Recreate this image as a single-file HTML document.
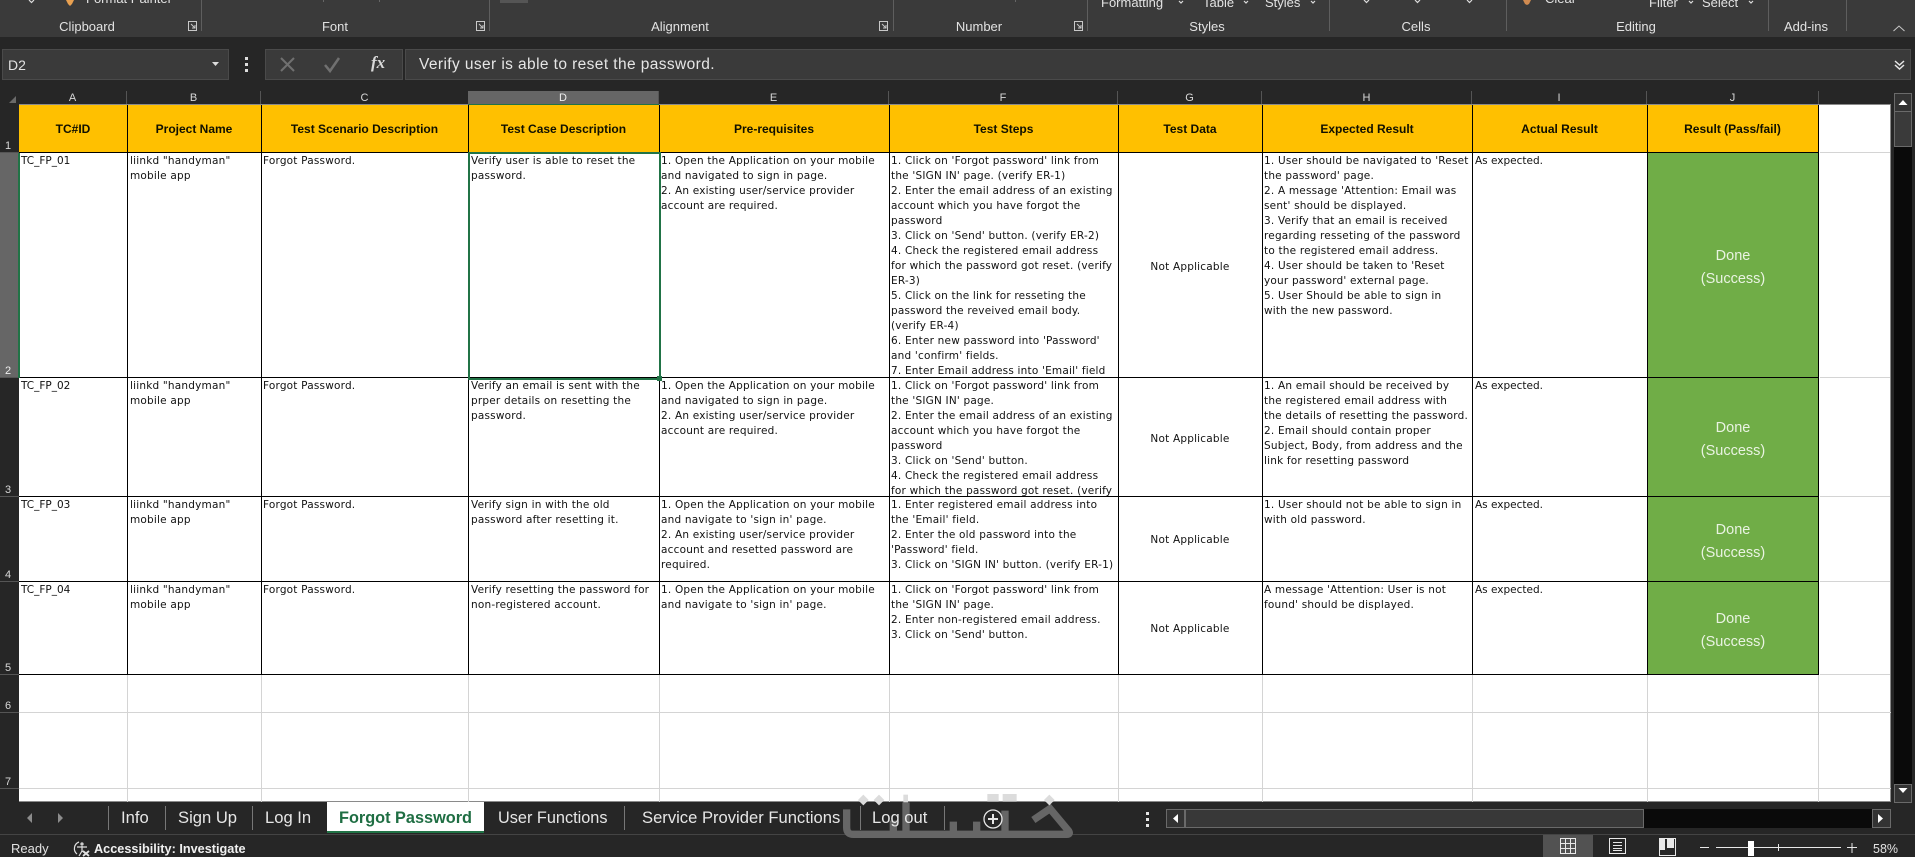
<!DOCTYPE html>
<html><head><meta charset="utf-8"><title>Excel</title>
<style>
html,body{margin:0;padding:0;background:#262626;width:1915px;height:857px;overflow:hidden}
body{position:relative;font-family:"Liberation Sans",sans-serif;color:#e6e6e6}
.a{position:absolute}
.l{position:absolute;white-space:nowrap;font-size:13px;line-height:16px;color:#e2e2e2}
.lbl{position:absolute;top:19px;white-space:nowrap;font-size:13px;line-height:16px;color:#e2e2e2;transform:translateX(-50%)}
.sep{position:absolute;top:0;width:1px;height:31px;background:#5e5e5e}
.h{position:absolute;top:91px;height:14px;font-size:11px;line-height:15px;text-align:center;color:#d8d8d8;background:#262626;border-right:1px solid #555;box-sizing:border-box}
.rh{position:absolute;left:0;width:19px;background:#262626;border-bottom:1px solid #555;box-sizing:border-box;color:#d8d8d8;font-size:11px}
.rh span{position:absolute;left:5px;bottom:-1px;line-height:13px}
.v{position:absolute;width:1px;background:#d4d4d4}
.hz{position:absolute;height:1px;background:#d4d4d4;left:19px;width:1872px}
.b{position:absolute;background:#000}
.row{position:absolute;left:0;width:1891px;overflow:hidden}
.c{position:absolute;top:1px;white-space:nowrap;font-family:"DejaVu Sans","Liberation Sans",sans-serif;font-size:10.500px;letter-spacing:.2px;line-height:15px;color:#111}
.c1{left:21px;letter-spacing:0}.c2{left:130px}.c3{left:263px}.c4{left:471px}.c5{left:661px}.c6{left:891px}.c8{left:1264px}.c9{left:1475px;letter-spacing:0}
.na{position:absolute;left:1118px;width:144px;text-align:center;white-space:nowrap;font-family:"DejaVu Sans",sans-serif;font-size:10.500px;letter-spacing:.2px;line-height:15px;color:#111}
.gr{position:absolute;left:1648px;width:170px;background:#70ad47;color:#e9f3e2;text-align:center;font-size:14.500px;line-height:23px;display:flex;align-items:center;justify-content:center;padding-top:5px;box-sizing:border-box}
.th{position:absolute;top:105px;height:47px;background:#ffc000;font-weight:bold;font-size:12px;line-height:49px;text-align:center;color:#101000;white-space:nowrap}
.tab{position:absolute;top:808px;font-size:16.600px;line-height:20px;color:#e6e6e6;white-space:nowrap}
.ts{position:absolute;top:806px;width:1px;height:24px;background:#777}
</style></head><body>

<!-- Ribbon -->
<div class="a" style="left:0;top:0;width:1915px;height:37px;background:#3a3a3a"></div>
<div class="sep" style="left:201px"></div><div class="sep" style="left:489px"></div><div class="sep" style="left:893px"></div><div class="sep" style="left:1087px"></div><div class="sep" style="left:1329px"></div><div class="sep" style="left:1506px"></div><div class="sep" style="left:1768px"></div><div class="sep" style="left:1846px"></div>
<div class="a" style="left:323px;top:0;width:1px;height:2px;background:#666"></div>
<div class="a" style="left:379px;top:0;width:1px;height:2px;background:#666"></div>
<div class="a" style="left:500px;top:0;width:28px;height:3px;background:#555"></div>
<div class="a" style="left:1015px;top:0;width:1px;height:2px;background:#666"></div>

<div class="l" style="left:86px;top:-9px">Format Painter</div>
<div class="l" style="left:1101px;top:-5px">Formatting</div>
<div class="l" style="left:1203px;top:-5px">Table</div>
<div class="l" style="left:1265px;top:-5px">Styles</div>
<div class="l" style="left:1545px;top:-9px">Clear</div>
<div class="l" style="left:1649px;top:-5px">Filter</div>
<div class="l" style="left:1702px;top:-5px">Select</div>
<svg class="a" style="left:0;top:0" width="1915" height="37" fill="none">
<g stroke="#dcdcdc" stroke-width="1.2">
<path d="M29 0l2.500 2.500L34 0M1179 1l2 2 2-2M1244 1l2 2 2-2M1311 1l2 2 2-2M1689 1l2 2 2-2M1749 1l2 2 2-2M1364 0l2.500 2.500 2.500-2.500M1415 0l2.500 2.500 2.500-2.500M1467 0l2.500 2.500 2.500-2.500"/>
</g>
<path d="M66 0h8l-2 4-2 2-2-2z" fill="#e8a050"/>
<path d="M1523 0h8l-2 4-2 1-2-1z" fill="#d08a50"/>
<g stroke="#c8c8c8" stroke-width="1">
<path d="M188.500 21.500h8v9h-8zM191 24l4 4M195 25v3h-3"/>
<path d="M476.500 21.500h8v9h-8zM479 24l4 4M483 25v3h-3"/>
<path d="M879.500 21.500h8v9h-8zM882 24l4 4M886 25v3h-3"/>
<path d="M1074.500 21.500h8v9h-8zM1077 24l4 4M1081 25v3h-3"/>
<path d="M1893.500 31l5.500-5 5.500 5"/>
</g>
</svg>
<div class="lbl" style="left:87px">Clipboard</div>
<div class="lbl" style="left:335px">Font</div>
<div class="lbl" style="left:680px">Alignment</div>
<div class="lbl" style="left:979px">Number</div>
<div class="lbl" style="left:1207px">Styles</div>
<div class="lbl" style="left:1416px">Cells</div>
<div class="lbl" style="left:1636px">Editing</div>
<div class="lbl" style="left:1806px">Add-ins</div>

<!-- Formula bar -->
<div class="a" style="left:2px;top:49px;width:225px;height:29px;background:#3a3a3a;border:1px solid #4a4a4a;box-sizing:content-box"></div>
<div class="l" style="left:8px;top:57px;font-size:14px">D2</div>
<div class="a" style="left:265px;top:49px;width:136px;height:29px;background:#3a3a3a;border:1px solid #4a4a4a"></div>
<div class="a" style="left:405px;top:49px;width:1504px;height:29px;background:#3a3a3a;border:1px solid #4a4a4a"></div>
<div class="l" style="left:419px;top:57px;font-size:15.500px;letter-spacing:.4px;color:#e6e6e6">Verify user is able to reset the password.</div>
<svg class="a" style="left:0;top:45px" width="1915" height="40" fill="none">
<path d="M212 17h7l-3.500 4z" fill="#ddd"/>
<g fill="#ddd"><rect x="245" y="12" width="3" height="3"/><rect x="245" y="18" width="3" height="3"/><rect x="245" y="24" width="3" height="3"/></g>
<path d="M281 13l13 13M294 13l-13 13" stroke="#707070" stroke-width="2"/>
<path d="M325 20l5 6 9-13" stroke="#707070" stroke-width="2.500"/>
<path d="M1895 16l4.500 4 4.500-4M1895 20l4.500 4 4.500-4" stroke="#e6e6e6" stroke-width="1.500"/>
</svg>
<div class="l" style="left:371px;top:55px;font-family:'Liberation Serif',serif;font-style:italic;font-weight:bold;font-size:17px;color:#d8d8d8">fx</div>

<!-- Column headers -->
<svg class="a" style="left:8px;top:95px" width="10" height="9"><path d="M8 1v7H1z" fill="#6a6a6a"/></svg>
<div class="h" style="left:19px;width:108px">A</div>
<div class="h" style="left:127px;width:134px">B</div>
<div class="h" style="left:261px;width:208px">C</div>
<div class="h" style="left:468px;width:191px;background:#666;color:#eee">D</div>
<div class="h" style="left:659px;width:230px">E</div>
<div class="h" style="left:889px;width:229px">F</div>
<div class="h" style="left:1118px;width:144px">G</div>
<div class="h" style="left:1262px;width:210px">H</div>
<div class="h" style="left:1472px;width:175px">I</div>
<div class="h" style="left:1647px;width:172px">J</div>

<!-- Sheet -->
<div class="a" style="left:19px;top:104px;width:1872px;height:698px;background:#fff;border-right:1px solid #8a8a8a;border-bottom:1px solid #8a8a8a;border-top:1px solid #8a8a8a;box-sizing:border-box"></div>

<!-- Row headers -->
<div class="rh" style="top:105px;height:48px"><span>1</span></div>
<div class="rh" style="top:153px;height:225px;background:#666;color:#eee"><span>2</span></div>
<div class="rh" style="top:378px;height:119px"><span>3</span></div>
<div class="rh" style="top:497px;height:85px"><span>4</span></div>
<div class="rh" style="top:582px;height:93px"><span>5</span></div>
<div class="rh" style="top:675px;height:38px"><span>6</span></div>
<div class="rh" style="top:713px;height:76px"><span>7</span></div>
<div class="rh" style="top:789px;height:13px;border-bottom:0"></div>

<!-- Gridlines below table -->
<div class="v" style="left:127px;top:674px;height:128px"></div><div class="v" style="left:261px;top:674px;height:128px"></div><div class="v" style="left:468px;top:674px;height:128px"></div><div class="v" style="left:659px;top:674px;height:128px"></div><div class="v" style="left:889px;top:674px;height:128px"></div><div class="v" style="left:1118px;top:674px;height:128px"></div><div class="v" style="left:1262px;top:674px;height:128px"></div><div class="v" style="left:1472px;top:674px;height:128px"></div><div class="v" style="left:1647px;top:674px;height:128px"></div><div class="v" style="left:1818px;top:674px;height:128px"></div>
<div class="hz" style="top:712px"></div><div class="hz" style="top:788px"></div>
<div class="a" style="left:1820px;top:152px;width:70px;height:1px;background:#d4d4d4"></div>
<div class="a" style="left:1820px;top:377px;width:70px;height:1px;background:#d4d4d4"></div>
<div class="a" style="left:1820px;top:496px;width:70px;height:1px;background:#d4d4d4"></div>
<div class="a" style="left:1820px;top:581px;width:70px;height:1px;background:#d4d4d4"></div>
<div class="a" style="left:1820px;top:674px;width:70px;height:1px;background:#d4d4d4"></div>

<!-- Header row -->
<div class="th" style="left:19px;width:108px">TC#ID</div>
<div class="th" style="left:127px;width:134px">Project Name</div>
<div class="th" style="left:261px;width:207px">Test Scenario Description</div>
<div class="th" style="left:468px;width:191px">Test Case Description</div>
<div class="th" style="left:659px;width:230px">Pre-requisites</div>
<div class="th" style="left:889px;width:229px">Test Steps</div>
<div class="th" style="left:1118px;width:144px">Test Data</div>
<div class="th" style="left:1262px;width:210px">Expected Result</div>
<div class="th" style="left:1472px;width:175px">Actual Result</div>
<div class="th" style="left:1647px;width:171px">Result (Pass/fail)</div>

<!-- Row 2 -->
<div class="row" style="top:153px;height:224px">
<div class="c c1">TC_FP_01</div>
<div class="c c2">liinkd "handyman"<br>mobile app</div>
<div class="c c3">Forgot Password.</div>
<div class="c c4">Verify user is able to reset the<br>password.</div>
<div class="c c5">1. Open the Application on your mobile<br>and navigated to sign in page.<br>2. An existing user/service provider<br>account are required.</div>
<div class="c c6">1. Click on 'Forgot password' link from<br>the 'SIGN IN' page. (verify ER-1)<br>2. Enter the email address of an existing<br>account which you have forgot the<br>password<br>3. Click on 'Send' button. (verify ER-2)<br>4. Check the registered email address<br>for which the password got reset. (verify<br>ER-3)<br>5. Click on the link for resseting the<br>password the reveived email body.<br>(verify ER-4)<br>6. Enter new password into 'Password'<br>and 'confirm' fields.<br>7. Enter Email address into 'Email' field</div>
<div class="na" style="top:107px">Not Applicable</div>
<div class="c c8">1. User should be navigated to 'Reset<br>the password' page.<br>2. A message 'Attention: Email was<br>sent' should be displayed.<br>3. Verify that an email is received<br>regarding resseting of the password<br>to the registered email address.<br>4. User should be taken to 'Reset<br>your password' external page.<br>5. User Should be able to sign in<br>with the new password.</div>
<div class="c c9">As expected.</div>
<div class="gr" style="top:0;height:224px">Done<br>(Success)</div>
</div>

<!-- Row 3 -->
<div class="row" style="top:378px;height:118px">
<div class="c c1">TC_FP_02</div>
<div class="c c2">liinkd "handyman"<br>mobile app</div>
<div class="c c3">Forgot Password.</div>
<div class="c c4">Verify an email is sent with the<br>prper details on resetting the<br>password.</div>
<div class="c c5">1. Open the Application on your mobile<br>and navigated to sign in page.<br>2. An existing user/service provider<br>account are required.</div>
<div class="c c6">1. Click on 'Forgot password' link from<br>the 'SIGN IN' page.<br>2. Enter the email address of an existing<br>account which you have forgot the<br>password<br>3. Click on 'Send' button.<br>4. Check the registered email address<br>for which the password got reset. (verify</div>
<div class="na" style="top:54px">Not Applicable</div>
<div class="c c8">1. An email should be received by<br>the registered email address with<br>the details of resetting the password.<br>2. Email should contain proper<br>Subject, Body, from address and the<br>link for resetting password</div>
<div class="c c9">As expected.</div>
<div class="gr" style="top:0;height:118px">Done<br>(Success)</div>
</div>

<!-- Row 4 -->
<div class="row" style="top:497px;height:84px">
<div class="c c1">TC_FP_03</div>
<div class="c c2">liinkd "handyman"<br>mobile app</div>
<div class="c c3">Forgot Password.</div>
<div class="c c4">Verify sign in with the old<br>password after resetting it.</div>
<div class="c c5">1. Open the Application on your mobile<br>and navigate to 'sign in' page.<br>2. An existing user/service provider<br>account and resetted password are<br>required.</div>
<div class="c c6">1. Enter registered email address into<br>the 'Email' field.<br>2. Enter the old password into the<br>'Password' field.<br>3. Click on 'SIGN IN' button. (verify ER-1)</div>
<div class="na" style="top:36px">Not Applicable</div>
<div class="c c8">1. User should not be able to sign in<br>with old password.</div>
<div class="c c9">As expected.</div>
<div class="gr" style="top:0;height:84px">Done<br>(Success)</div>
</div>

<!-- Row 5 -->
<div class="row" style="top:582px;height:92px">
<div class="c c1">TC_FP_04</div>
<div class="c c2">liinkd "handyman"<br>mobile app</div>
<div class="c c3">Forgot Password.</div>
<div class="c c4">Verify resetting the password for<br>non-registered account.</div>
<div class="c c5">1. Open the Application on your mobile<br>and navigate to 'sign in' page.</div>
<div class="c c6">1. Click on 'Forgot password' link from<br>the 'SIGN IN' page.<br>2. Enter non-registered email address.<br>3. Click on 'Send' button.</div>
<div class="na" style="top:40px">Not Applicable</div>
<div class="c c8">A message 'Attention: User is not<br>found' should be displayed.</div>
<div class="c c9">As expected.</div>
<div class="gr" style="top:0;height:92px">Done<br>(Success)</div>
</div>

<!-- Black table borders -->
<div class="b" style="left:127px;top:105px;width:1px;height:569px"></div>
<div class="b" style="left:261px;top:105px;width:1px;height:569px"></div>
<div class="b" style="left:468px;top:105px;width:1px;height:569px"></div>
<div class="b" style="left:659px;top:105px;width:1px;height:569px"></div>
<div class="b" style="left:889px;top:105px;width:1px;height:569px"></div>
<div class="b" style="left:1118px;top:105px;width:1px;height:569px"></div>
<div class="b" style="left:1262px;top:105px;width:1px;height:569px"></div>
<div class="b" style="left:1472px;top:105px;width:1px;height:569px"></div>
<div class="b" style="left:1647px;top:105px;width:1px;height:569px"></div>
<div class="b" style="left:1818px;top:105px;width:1px;height:569px"></div>
<div class="b" style="left:19px;top:152px;width:1800px;height:1px"></div>
<div class="b" style="left:19px;top:377px;width:1800px;height:1px"></div>
<div class="b" style="left:19px;top:496px;width:1800px;height:1px"></div>
<div class="b" style="left:19px;top:581px;width:1800px;height:1px"></div>
<div class="b" style="left:19px;top:674px;width:1800px;height:1px"></div>

<!-- Selection -->
<div class="a" style="left:468px;top:152px;width:189px;height:224px;border:2px solid #217346"></div>
<div class="a" style="left:657px;top:376px;width:5px;height:5px;background:#217346;border:0"></div>
<div class="a" style="left:18px;top:153px;width:2px;height:225px;background:#217346"></div>
<div class="a" style="left:468px;top:104px;width:191px;height:1px;background:#217346"></div>

<!-- Scrollbars -->
<div class="a" style="left:1894px;top:93px;width:18px;height:709px;background:#0a0a0a"></div>
<div class="a" style="left:1894px;top:93px;width:16px;height:17px;background:#333;border:1px solid #6a6a6a"></div>
<div class="a" style="left:1894px;top:111px;width:16px;height:34px;background:#3a3a3a;border:1px solid #6a6a6a"></div>
<div class="a" style="left:1894px;top:784px;width:16px;height:17px;background:#333;border:1px solid #6a6a6a"></div>
<svg class="a" style="left:1894px;top:93px" width="18" height="710"><path d="M4.500 12h9L9 7zM4.500 695h9L9 700z" fill="#fff"/></svg>

<div class="a" style="left:1166px;top:809px;width:725px;height:19px;background:#0a0a0a"></div>
<div class="a" style="left:1166px;top:809px;width:17px;height:17px;background:#333;border:1px solid #6a6a6a"></div>
<div class="a" style="left:1185px;top:809px;width:457px;height:17px;background:#383838;border:1px solid #6a6a6a"></div>
<div class="a" style="left:1872px;top:809px;width:17px;height:17px;background:#333;border:1px solid #6a6a6a"></div>
<svg class="a" style="left:1166px;top:809px" width="725" height="19"><path d="M12 5v9L7 9.500zM712 5v9l5-4.500z" fill="#fff"/></svg>

<!-- Status bar divider -->
<div class="a" style="left:0;top:834px;width:1915px;height:1px;background:#444"></div>

<!-- Watermark -->
<svg class="a" style="left:830px;top:790px" width="250" height="55" viewBox="0 0 750 165" fill="none">
<defs>
<clipPath id="dk"><rect x="0" y="37" width="750" height="128"/></clipPath>
</defs>
<g stroke="#666" stroke-width="22" clip-path="url(#dk)">
<path d="M50 58v55q0 20 20 20h640q12 0 6-10L660 56l-50 34"/>
<path d="M228 15v118M190 92v41M370 95v38M440 95v38M525 62v71"/>
</g>
<g fill="#dcdcdc">
<path d="M100 14l16 16-16 16-16-16zM147 14l16 16-16 16-16-16zM658 14l16 16-16 16-16-16z"/>
<rect x="472" y="12" width="34" height="22"/><rect x="518" y="12" width="42" height="22"/>
<rect x="220" y="14" width="14" height="23"/>
</g>
</svg>

<!-- Tabs -->
<svg class="a" style="left:20px;top:810px" width="50" height="16"><path d="M12 3v10L7 8zM38 3v10l5-5z" fill="#8c8c8c"/></svg>
<div class="ts" style="left:108px"></div><div class="ts" style="left:165px"></div><div class="ts" style="left:252px"></div><div class="ts" style="left:624px"></div><div class="ts" style="left:860px"></div><div class="ts" style="left:944px"></div>
<div class="a" style="left:327px;top:802px;width:157px;height:29px;background:#fff;border-bottom:2px solid #217346"></div>
<div class="tab" style="left:121px">Info</div>
<div class="tab" style="left:178px">Sign Up</div>
<div class="tab" style="left:265px">Log In</div>
<div class="tab" style="left:339px;font-weight:bold;font-size:16.300px;color:#1f6e43">Forgot Password</div>
<div class="tab" style="left:498px;font-size:16.300px">User Functions</div>
<div class="tab" style="left:642px">Service Provider Functions</div>
<div class="tab" style="left:872px">Log out</div>
<svg class="a" style="left:981px;top:807px" width="24" height="24" fill="none"><circle cx="12" cy="12" r="9" stroke="#e6e6e6" stroke-width="1.300"/><path d="M12 7v10M7 12h10" stroke="#e6e6e6" stroke-width="2"/></svg>
<svg class="a" style="left:1145px;top:811px" width="6" height="17" fill="#e6e6e6"><rect x="1" y="1" width="3" height="3"/><rect x="1" y="7" width="3" height="3"/><rect x="1" y="13" width="3" height="3"/></svg>

<!-- Status bar -->
<div class="l" style="left:11px;top:841px;font-size:13px">Ready</div>
<svg class="a" style="left:70px;top:840px" width="24" height="17" fill="none" stroke="#e0e0e0" stroke-width="1.200"><path d="M9 2a7 7 0 0 0-2 12"/><circle cx="12" cy="4" r="1"/><path d="M7 7h10M12 6v5l-3 5M12 11l3 2"/><path d="M13 11l6 5M19 11l-6 5" stroke-width="1.800"/></svg>
<div class="l" style="left:94px;top:841px;font-size:12.700px;font-weight:bold;color:#f0f0f0">Accessibility: Investigate</div>
<div class="a" style="left:1543px;top:835px;width:50px;height:22px;background:#525252"></div>
<svg class="a" style="left:1540px;top:835px" width="375" height="22" fill="none" stroke="#e8e8e8">
<path d="M20.500 3.500h15v15h-15zM25.500 3.500v15M30.500 3.500v15M20.500 8.500h15M20.500 13.500h15"/>
<path d="M69.500 3.500h16v15h-16zM73 7.500h9M73 10.500h9M73 13.500h9M73 15.500h9" stroke-width="1"/>
<path d="M119.500 3.500h16v17h-16z"/>
<path d="M120 4h5v11h-5zM127 4h7v9h-7z" fill="#e8e8e8" stroke="none"/>
<path d="M160 12.500h9M176 12.500h125" stroke="#e8e8e8"/>
<path d="M238.500 9v7M307 12.500h10M312 8v10"/>
<rect x="208" y="6" width="6" height="15" fill="#fff" stroke="none"/>
</svg>
<div class="l" style="left:1873px;top:841px;font-size:12.500px">58%</div>

</body></html>
